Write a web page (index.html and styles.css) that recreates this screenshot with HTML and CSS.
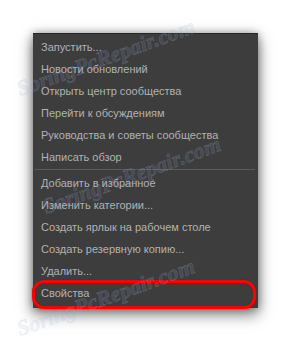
FILE: index.html
```html
<!DOCTYPE html>
<html lang="ru">
<head>
    <meta charset="UTF-8">
    <title>Context menu</title>
    <link rel="stylesheet" href="styles.css">
</head>
<body>
    <div class="stage">
        <ul class="menu">
            <li class="menu-item">Запустить...</li>
            <li class="menu-item">Новости обновлений</li>
            <li class="menu-item">Открыть центр сообщества</li>
            <li class="menu-item">Перейти к обсуждениям</li>
            <li class="menu-item">Руководства и советы сообщества</li>
            <li class="menu-item">Написать обзор</li>
            <li class="menu-separator"></li>
            <li class="menu-item">Добавить в избранное</li>
            <li class="menu-item">Изменить категории...</li>
            <li class="menu-item">Создать ярлык на рабочем столе</li>
            <li class="menu-item">Создать резервную копию...</li>
            <li class="menu-item">Удалить...</li>
            <li class="menu-item menu-item-marked">Свойства</li>
        </ul>
        <div class="watermark watermark-top">SoringPcRepair.com</div>
        <div class="watermark watermark-mid">SoringPcRepair.com</div>
        <div class="watermark watermark-bottom">SoringPcRepair.com</div>
    </div>
</body>
</html>
```

FILE: styles.css
```css
body {
    margin: 0;
    background: #fff;
    font-family: 'Liberation Sans', Arial, sans-serif;
}

.stage {
    position: relative;
    width: 291px;
    height: 342px;
    padding: 33px 0 0 33px;
    box-sizing: border-box;
    overflow: hidden;
}

.menu {
    list-style: none;
    margin: 0;
    width: 225px;
    padding: 2px 0 4px;
    box-sizing: border-box;
    background-color: #3d3d3d;
    border-top: 1px solid #262626;
    box-shadow: 0 6px 14px rgba(0, 0, 0, 0.55), 0 0 8px rgba(0, 0, 0, 0.3);
}

.menu-item {
    position: relative;
    height: 22px;
    line-height: 22px;
    padding-left: 8px;
    font-size: 11px;
    color: #b2b2b2;
    white-space: nowrap;
}

.menu-separator {
    height: 1px;
    margin: 1px 3px 2px 2px;
    background-color: #5a5a5a;
}

.menu-item-marked::after {
    content: '';
    position: absolute;
    left: -1px;
    right: 2px;
    top: -2px;
    bottom: -5px;
    border: 3px solid #ff0000;
    border-radius: 12px;
    box-shadow: 0 0 1px #700, inset 0 0 1px #700;
}

.watermark {
    position: absolute;
    font-family: 'Liberation Serif', serif;
    font-style: italic;
    font-weight: bold;
    font-size: 22px;
    color: rgba(150, 170, 215, 0.12);
    -webkit-text-stroke: 0.5px rgba(170, 190, 230, 0.3);
    transform: rotate(-20deg);
    transform-origin: left bottom;
    white-space: nowrap;
}

.watermark-top {
    left: 22px;
    top: 76px;
}

.watermark-mid {
    left: 48px;
    top: 194px;
}

.watermark-bottom {
    left: 22px;
    top: 316px;
}
```
